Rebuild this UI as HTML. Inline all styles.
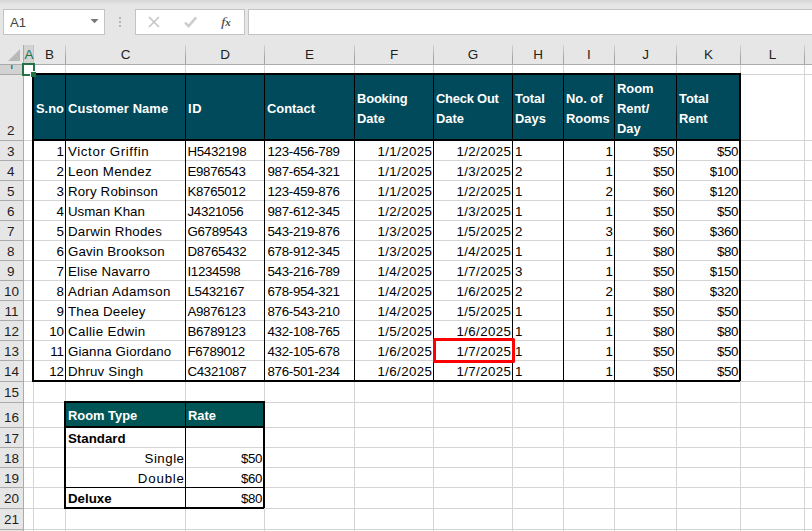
<!DOCTYPE html>
<html lang="en"><head><meta charset="utf-8"><title>Hotel bookings</title>
<style>
html,body{margin:0;padding:0}
body{width:812px;height:531px;overflow:hidden;position:relative;background:#fff;font-family:"Liberation Sans",sans-serif;color:#000}
div{position:absolute;box-sizing:border-box;white-space:nowrap}
.top{left:0;top:0;width:812px;height:45px;background:#e6e6e6}
.topg{left:0;top:0;width:812px;height:5px;background:linear-gradient(#d6d6d6,#e6e6e6)}
.box{background:#fff;border:1px solid #c3c3c3}
.ch{top:45px;height:19px;background:#e6e6e6;color:#1e1e1e;font-size:13.5px;line-height:19px;text-align:center}
.rh{left:0;width:23px;background:#e6e6e6;color:#1e1e1e;font-size:13.5px;text-align:center}
.gl{background:#d4d4d4}
.hl{background:#ababab}
.bk{background:#000}
.c{font-size:13.3px;line-height:20px;height:20px;overflow:visible}
.r{text-align:right}
.b{font-weight:bold}
.th{color:#fff;font-weight:bold;font-size:12.9px;line-height:20px}

</style></head><body>
<div class="top"></div><div class="topg"></div>
<div class="box" style="left:3px;top:9px;width:102px;height:26px"></div>
<div style="left:10px;top:13px;font-size:13.2px;line-height:20px;color:#444">A1</div>
<svg style="position:absolute;left:90px;top:19px" width="9" height="5" viewBox="0 0 9 5"><path d="M0.5 0h8l-4 4.3z" fill="#777"/></svg>
<div style="left:119px;top:17px;width:2px;height:2px;background:#b5b5b5"></div><div style="left:119px;top:21px;width:2px;height:2px;background:#b5b5b5"></div><div style="left:119px;top:25px;width:2px;height:2px;background:#b5b5b5"></div>
<div class="box" style="left:135px;top:9px;width:110px;height:26px"></div>
<svg style="position:absolute;left:148px;top:16px" width="12" height="12" viewBox="0 0 12 12"><path d="M1 1l10 10M11 1L1 11" stroke="#c6c6c6" stroke-width="1.7" fill="none"/></svg>
<svg style="position:absolute;left:183px;top:15px" width="16" height="14" viewBox="0 0 16 14"><path d="M2 7.6l3.6 3.6L13.2 2.4" stroke="#cdcdcd" stroke-width="2.6" fill="none"/></svg>
<div style="left:221px;top:12px;font-family:'Liberation Serif',serif;font-style:italic;font-size:13px;line-height:20px;color:#4a4a4a;letter-spacing:0"><span style="display:inline-block;transform:scaleX(1.25);transform-origin:0 50%">f</span><span style="font-size:11px;font-weight:bold;margin-left:0.5px">x</span></div>
<div class="box" style="left:248px;top:9px;width:580px;height:26px"></div>
<div style="left:0;top:45px;width:812px;height:20px;background:#e6e6e6"></div>
<div class="hl" style="left:0;top:64px;width:812px;height:1px"></div>
<svg style="position:absolute;left:8px;top:49px" width="12" height="12" viewBox="0 0 12 12"><path d="M12 0v12H0z" fill="#b8b8b8"/></svg>
<div class="ch" style="left:23px;width:11px;height:18px;background:#d2d2d2;color:#217346;border-left:1px solid #c2c2c2;border-right:1px solid #c2c2c2;text-indent:0.5px">A</div>
<div class="ch" style="left:34px;width:31px">B</div>
<div style="left:65px;top:45px;width:1px;height:19px;background:linear-gradient(#d2d2d2,#a4a4a4 70%)"></div>
<div class="ch" style="left:66px;width:119px">C</div>
<div style="left:185px;top:45px;width:1px;height:19px;background:linear-gradient(#d2d2d2,#a4a4a4 70%)"></div>
<div class="ch" style="left:186px;width:78px">D</div>
<div style="left:264px;top:45px;width:1px;height:19px;background:linear-gradient(#d2d2d2,#a4a4a4 70%)"></div>
<div class="ch" style="left:265px;width:89px">E</div>
<div style="left:354px;top:45px;width:1px;height:19px;background:linear-gradient(#d2d2d2,#a4a4a4 70%)"></div>
<div class="ch" style="left:355px;width:78px">F</div>
<div style="left:433px;top:45px;width:1px;height:19px;background:linear-gradient(#d2d2d2,#a4a4a4 70%)"></div>
<div class="ch" style="left:434px;width:78px">G</div>
<div style="left:512px;top:45px;width:1px;height:19px;background:linear-gradient(#d2d2d2,#a4a4a4 70%)"></div>
<div class="ch" style="left:513px;width:50px">H</div>
<div style="left:563px;top:45px;width:1px;height:19px;background:linear-gradient(#d2d2d2,#a4a4a4 70%)"></div>
<div class="ch" style="left:564px;width:50px">I</div>
<div style="left:614px;top:45px;width:1px;height:19px;background:linear-gradient(#d2d2d2,#a4a4a4 70%)"></div>
<div class="ch" style="left:615px;width:61px">J</div>
<div style="left:676px;top:45px;width:1px;height:19px;background:linear-gradient(#d2d2d2,#a4a4a4 70%)"></div>
<div class="ch" style="left:677px;width:63px">K</div>
<div style="left:740px;top:45px;width:1px;height:19px;background:linear-gradient(#d2d2d2,#a4a4a4 70%)"></div>
<div class="ch" style="left:741px;width:63px">L</div>
<div style="left:804px;top:45px;width:1px;height:19px;background:linear-gradient(#d2d2d2,#a4a4a4 70%)"></div>
<div class="hl" style="left:23px;top:45px;width:1px;height:19px"></div>
<div style="left:0;top:65px;width:24px;height:470px;background:#e6e6e6"></div>
<div class="hl" style="left:23px;top:65px;width:1px;height:470px"></div>
<div style="left:0;top:65px;width:23px;height:9px;background:#d2d2d2"></div>
<div style="left:0;top:65px;width:23px;height:4px;overflow:hidden"><div class="rh" style="top:-10px;height:19px;line-height:21px;background:none;color:#217346">1</div></div>
<div class="rh" style="top:120px;height:19px;line-height:21px;text-indent:-1.5px">2</div>
<div class="hl" style="left:0;top:140px;width:23px;height:1px"></div>
<div class="rh" style="top:141px;height:19px;line-height:21px;text-indent:-1.5px">3</div>
<div class="hl" style="left:0;top:160px;width:23px;height:1px"></div>
<div class="rh" style="top:161px;height:19px;line-height:21px;text-indent:-1.5px">4</div>
<div class="hl" style="left:0;top:180px;width:23px;height:1px"></div>
<div class="rh" style="top:181px;height:19px;line-height:21px;text-indent:-1.5px">5</div>
<div class="hl" style="left:0;top:200px;width:23px;height:1px"></div>
<div class="rh" style="top:201px;height:19px;line-height:21px;text-indent:-1.5px">6</div>
<div class="hl" style="left:0;top:220px;width:23px;height:1px"></div>
<div class="rh" style="top:221px;height:19px;line-height:21px;text-indent:-1.5px">7</div>
<div class="hl" style="left:0;top:240px;width:23px;height:1px"></div>
<div class="rh" style="top:241px;height:19px;line-height:21px;text-indent:-1.5px">8</div>
<div class="hl" style="left:0;top:260px;width:23px;height:1px"></div>
<div class="rh" style="top:261px;height:19px;line-height:21px;text-indent:-1.5px">9</div>
<div class="hl" style="left:0;top:280px;width:23px;height:1px"></div>
<div class="rh" style="top:281px;height:19px;line-height:21px">10</div>
<div class="hl" style="left:0;top:300px;width:23px;height:1px"></div>
<div class="rh" style="top:301px;height:19px;line-height:21px">11</div>
<div class="hl" style="left:0;top:320px;width:23px;height:1px"></div>
<div class="rh" style="top:321px;height:19px;line-height:21px">12</div>
<div class="hl" style="left:0;top:340px;width:23px;height:1px"></div>
<div class="rh" style="top:341px;height:19px;line-height:21px">13</div>
<div class="hl" style="left:0;top:360px;width:23px;height:1px"></div>
<div class="rh" style="top:361px;height:19px;line-height:21px">14</div>
<div class="hl" style="left:0;top:381px;width:23px;height:1px"></div>
<div class="rh" style="top:382px;height:19px;line-height:21px">15</div>
<div class="hl" style="left:0;top:402px;width:23px;height:1px"></div>
<div class="rh" style="top:407px;height:19px;line-height:21px">16</div>
<div class="hl" style="left:0;top:427px;width:23px;height:1px"></div>
<div class="rh" style="top:428px;height:19px;line-height:21px">17</div>
<div class="hl" style="left:0;top:447px;width:23px;height:1px"></div>
<div class="rh" style="top:448px;height:19px;line-height:21px">18</div>
<div class="hl" style="left:0;top:467px;width:23px;height:1px"></div>
<div class="rh" style="top:468px;height:19px;line-height:21px">19</div>
<div class="hl" style="left:0;top:487px;width:23px;height:1px"></div>
<div class="rh" style="top:488px;height:19px;line-height:21px">20</div>
<div class="hl" style="left:0;top:508px;width:23px;height:1px"></div>
<div class="rh" style="top:509px;height:19px;line-height:21px">21</div>
<div class="hl" style="left:0;top:529px;width:23px;height:1px"></div>
<div class="rh" style="top:530px;height:19px;line-height:21px">22</div>
<div class="hl" style="left:0;top:550px;width:23px;height:1px"></div>
<div class="hl" style="left:0;top:74px;width:23px;height:1px"></div>
<div class="gl" style="left:24px;top:74px;width:788px;height:1px"></div>
<div class="gl" style="left:24px;top:140px;width:788px;height:1px"></div>
<div class="gl" style="left:24px;top:160px;width:788px;height:1px"></div>
<div class="gl" style="left:24px;top:180px;width:788px;height:1px"></div>
<div class="gl" style="left:24px;top:200px;width:788px;height:1px"></div>
<div class="gl" style="left:24px;top:220px;width:788px;height:1px"></div>
<div class="gl" style="left:24px;top:240px;width:788px;height:1px"></div>
<div class="gl" style="left:24px;top:260px;width:788px;height:1px"></div>
<div class="gl" style="left:24px;top:280px;width:788px;height:1px"></div>
<div class="gl" style="left:24px;top:300px;width:788px;height:1px"></div>
<div class="gl" style="left:24px;top:320px;width:788px;height:1px"></div>
<div class="gl" style="left:24px;top:340px;width:788px;height:1px"></div>
<div class="gl" style="left:24px;top:360px;width:788px;height:1px"></div>
<div class="gl" style="left:24px;top:381px;width:788px;height:1px"></div>
<div class="gl" style="left:24px;top:402px;width:788px;height:1px"></div>
<div class="gl" style="left:24px;top:427px;width:788px;height:1px"></div>
<div class="gl" style="left:24px;top:447px;width:788px;height:1px"></div>
<div class="gl" style="left:24px;top:467px;width:788px;height:1px"></div>
<div class="gl" style="left:24px;top:487px;width:788px;height:1px"></div>
<div class="gl" style="left:24px;top:508px;width:788px;height:1px"></div>
<div class="gl" style="left:24px;top:529px;width:788px;height:1px"></div>
<div class="gl" style="left:24px;top:550px;width:788px;height:1px"></div>
<div class="gl" style="left:33px;top:65px;width:1px;height:470px"></div>
<div class="gl" style="left:65px;top:65px;width:1px;height:470px"></div>
<div class="gl" style="left:185px;top:65px;width:1px;height:470px"></div>
<div class="gl" style="left:264px;top:65px;width:1px;height:470px"></div>
<div class="gl" style="left:354px;top:65px;width:1px;height:470px"></div>
<div class="gl" style="left:433px;top:65px;width:1px;height:470px"></div>
<div class="gl" style="left:512px;top:65px;width:1px;height:470px"></div>
<div class="gl" style="left:563px;top:65px;width:1px;height:470px"></div>
<div class="gl" style="left:614px;top:65px;width:1px;height:470px"></div>
<div class="gl" style="left:676px;top:65px;width:1px;height:470px"></div>
<div class="gl" style="left:740px;top:65px;width:1px;height:470px"></div>
<div class="gl" style="left:804px;top:65px;width:1px;height:470px"></div>
<div class="gl" style="left:868px;top:65px;width:1px;height:470px"></div>
<div style="left:34px;top:75px;width:706px;height:65px;background:#014a5b"></div>
<div class="th" style="left:36px;top:99px">S.no</div>
<div class="th" style="left:68px;top:99px;letter-spacing:0.1px">Customer Name</div>
<div class="th" style="left:188px;top:99px;letter-spacing:0.7px">ID</div>
<div class="th" style="left:267px;top:99px">Contact</div>
<div class="th" style="left:357px;top:89px;letter-spacing:-0.15px">Booking</div>
<div class="th" style="left:357px;top:109px">Date</div>
<div class="th" style="left:436px;top:89px;letter-spacing:-0.2px">Check Out</div>
<div class="th" style="left:436px;top:109px">Date</div>
<div class="th" style="left:515px;top:89px">Total</div>
<div class="th" style="left:515px;top:109px">Days</div>
<div class="th" style="left:566px;top:89px">No. of</div>
<div class="th" style="left:566px;top:109px">Rooms</div>
<div class="th" style="left:617px;top:79px">Room</div>
<div class="th" style="left:617px;top:99px">Rent/</div>
<div class="th" style="left:617px;top:119px">Day</div>
<div class="th" style="left:679px;top:89px">Total</div>
<div class="th" style="left:679px;top:109px">Rent</div>
<div class="c r " style="left:34px;width:30px;top:142px">1</div>
<div class="c " style="left:68px;top:142px;letter-spacing:0.62px">Victor Griffin</div>
<div class="c " style="left:187.5px;top:142px;letter-spacing:-0.33px">H5432198</div>
<div class="c " style="left:267.5px;top:142px;letter-spacing:-0.3px">123-456-789</div>
<div class="c r " style="left:355px;width:77.4px;top:142px;letter-spacing:0.4px">1/1/2025</div>
<div class="c r " style="left:434px;width:77.4px;top:142px;letter-spacing:0.4px">1/2/2025</div>
<div class="c " style="left:515px;top:142px">1</div>
<div class="c r " style="left:564px;width:49px;top:142px">1</div>
<div class="c r " style="left:615px;width:59.2px;top:142px;letter-spacing:-0.3px">$50</div>
<div class="c r " style="left:677px;width:61.2px;top:142px;letter-spacing:-0.3px">$50</div>
<div class="c r " style="left:34px;width:30px;top:162px">2</div>
<div class="c " style="left:68px;top:162px;letter-spacing:0.3px">Leon Mendez</div>
<div class="c " style="left:187.5px;top:162px;letter-spacing:-0.33px">E9876543</div>
<div class="c " style="left:267.5px;top:162px;letter-spacing:-0.3px">987-654-321</div>
<div class="c r " style="left:355px;width:77.4px;top:162px;letter-spacing:0.4px">1/1/2025</div>
<div class="c r " style="left:434px;width:77.4px;top:162px;letter-spacing:0.4px">1/3/2025</div>
<div class="c " style="left:515px;top:162px">2</div>
<div class="c r " style="left:564px;width:49px;top:162px">1</div>
<div class="c r " style="left:615px;width:59.2px;top:162px;letter-spacing:-0.3px">$50</div>
<div class="c r " style="left:677px;width:61.2px;top:162px;letter-spacing:-0.3px">$100</div>
<div class="c r " style="left:34px;width:30px;top:182px">3</div>
<div class="c " style="left:68px;top:182px;letter-spacing:0.17px">Rory Robinson</div>
<div class="c " style="left:187.5px;top:182px;letter-spacing:-0.33px">K8765012</div>
<div class="c " style="left:267.5px;top:182px;letter-spacing:-0.3px">123-459-876</div>
<div class="c r " style="left:355px;width:77.4px;top:182px;letter-spacing:0.4px">1/1/2025</div>
<div class="c r " style="left:434px;width:77.4px;top:182px;letter-spacing:0.4px">1/2/2025</div>
<div class="c " style="left:515px;top:182px">1</div>
<div class="c r " style="left:564px;width:49px;top:182px">2</div>
<div class="c r " style="left:615px;width:59.2px;top:182px;letter-spacing:-0.3px">$60</div>
<div class="c r " style="left:677px;width:61.2px;top:182px;letter-spacing:-0.3px">$120</div>
<div class="c r " style="left:34px;width:30px;top:202px">4</div>
<div class="c " style="left:68px;top:202px">Usman Khan</div>
<div class="c " style="left:187.5px;top:202px;letter-spacing:-0.33px">J4321056</div>
<div class="c " style="left:267.5px;top:202px;letter-spacing:-0.3px">987-612-345</div>
<div class="c r " style="left:355px;width:77.4px;top:202px;letter-spacing:0.4px">1/2/2025</div>
<div class="c r " style="left:434px;width:77.4px;top:202px;letter-spacing:0.4px">1/3/2025</div>
<div class="c " style="left:515px;top:202px">1</div>
<div class="c r " style="left:564px;width:49px;top:202px">1</div>
<div class="c r " style="left:615px;width:59.2px;top:202px;letter-spacing:-0.3px">$50</div>
<div class="c r " style="left:677px;width:61.2px;top:202px;letter-spacing:-0.3px">$50</div>
<div class="c r " style="left:34px;width:30px;top:222px">5</div>
<div class="c " style="left:68px;top:222px;letter-spacing:0.25px">Darwin Rhodes</div>
<div class="c " style="left:187.5px;top:222px;letter-spacing:-0.33px">G6789543</div>
<div class="c " style="left:267.5px;top:222px;letter-spacing:-0.3px">543-219-876</div>
<div class="c r " style="left:355px;width:77.4px;top:222px;letter-spacing:0.4px">1/3/2025</div>
<div class="c r " style="left:434px;width:77.4px;top:222px;letter-spacing:0.4px">1/5/2025</div>
<div class="c " style="left:515px;top:222px">2</div>
<div class="c r " style="left:564px;width:49px;top:222px">3</div>
<div class="c r " style="left:615px;width:59.2px;top:222px;letter-spacing:-0.3px">$60</div>
<div class="c r " style="left:677px;width:61.2px;top:222px;letter-spacing:-0.3px">$360</div>
<div class="c r " style="left:34px;width:30px;top:242px">6</div>
<div class="c " style="left:68px;top:242px;letter-spacing:0.15px">Gavin Brookson</div>
<div class="c " style="left:187.5px;top:242px;letter-spacing:-0.33px">D8765432</div>
<div class="c " style="left:267.5px;top:242px;letter-spacing:-0.3px">678-912-345</div>
<div class="c r " style="left:355px;width:77.4px;top:242px;letter-spacing:0.4px">1/3/2025</div>
<div class="c r " style="left:434px;width:77.4px;top:242px;letter-spacing:0.4px">1/4/2025</div>
<div class="c " style="left:515px;top:242px">1</div>
<div class="c r " style="left:564px;width:49px;top:242px">1</div>
<div class="c r " style="left:615px;width:59.2px;top:242px;letter-spacing:-0.3px">$80</div>
<div class="c r " style="left:677px;width:61.2px;top:242px;letter-spacing:-0.3px">$80</div>
<div class="c r " style="left:34px;width:30px;top:262px">7</div>
<div class="c " style="left:68px;top:262px;letter-spacing:0.17px">Elise Navarro</div>
<div class="c " style="left:187.5px;top:262px;letter-spacing:-0.33px">I1234598</div>
<div class="c " style="left:267.5px;top:262px;letter-spacing:-0.3px">543-216-789</div>
<div class="c r " style="left:355px;width:77.4px;top:262px;letter-spacing:0.4px">1/4/2025</div>
<div class="c r " style="left:434px;width:77.4px;top:262px;letter-spacing:0.4px">1/7/2025</div>
<div class="c " style="left:515px;top:262px">3</div>
<div class="c r " style="left:564px;width:49px;top:262px">1</div>
<div class="c r " style="left:615px;width:59.2px;top:262px;letter-spacing:-0.3px">$50</div>
<div class="c r " style="left:677px;width:61.2px;top:262px;letter-spacing:-0.3px">$150</div>
<div class="c r " style="left:34px;width:30px;top:282px">8</div>
<div class="c " style="left:68px;top:282px;letter-spacing:0.38px">Adrian Adamson</div>
<div class="c " style="left:187.5px;top:282px;letter-spacing:-0.33px">L5432167</div>
<div class="c " style="left:267.5px;top:282px;letter-spacing:-0.3px">678-954-321</div>
<div class="c r " style="left:355px;width:77.4px;top:282px;letter-spacing:0.4px">1/4/2025</div>
<div class="c r " style="left:434px;width:77.4px;top:282px;letter-spacing:0.4px">1/6/2025</div>
<div class="c " style="left:515px;top:282px">2</div>
<div class="c r " style="left:564px;width:49px;top:282px">2</div>
<div class="c r " style="left:615px;width:59.2px;top:282px;letter-spacing:-0.3px">$80</div>
<div class="c r " style="left:677px;width:61.2px;top:282px;letter-spacing:-0.3px">$320</div>
<div class="c r " style="left:34px;width:30px;top:302px">9</div>
<div class="c " style="left:68px;top:302px;letter-spacing:0.2px">Thea Deeley</div>
<div class="c " style="left:187.5px;top:302px;letter-spacing:-0.33px">A9876123</div>
<div class="c " style="left:267.5px;top:302px;letter-spacing:-0.3px">876-543-210</div>
<div class="c r " style="left:355px;width:77.4px;top:302px;letter-spacing:0.4px">1/4/2025</div>
<div class="c r " style="left:434px;width:77.4px;top:302px;letter-spacing:0.4px">1/5/2025</div>
<div class="c " style="left:515px;top:302px">1</div>
<div class="c r " style="left:564px;width:49px;top:302px">1</div>
<div class="c r " style="left:615px;width:59.2px;top:302px;letter-spacing:-0.3px">$50</div>
<div class="c r " style="left:677px;width:61.2px;top:302px;letter-spacing:-0.3px">$50</div>
<div class="c r " style="left:34px;width:30px;top:322px">10</div>
<div class="c " style="left:68px;top:322px;letter-spacing:0.36px">Callie Edwin</div>
<div class="c " style="left:187.5px;top:322px;letter-spacing:-0.33px">B6789123</div>
<div class="c " style="left:267.5px;top:322px;letter-spacing:-0.3px">432-108-765</div>
<div class="c r " style="left:355px;width:77.4px;top:322px;letter-spacing:0.4px">1/5/2025</div>
<div class="c r " style="left:434px;width:77.4px;top:322px;letter-spacing:0.4px">1/6/2025</div>
<div class="c " style="left:515px;top:322px">1</div>
<div class="c r " style="left:564px;width:49px;top:322px">1</div>
<div class="c r " style="left:615px;width:59.2px;top:322px;letter-spacing:-0.3px">$80</div>
<div class="c r " style="left:677px;width:61.2px;top:322px;letter-spacing:-0.3px">$80</div>
<div class="c r " style="left:34px;width:30px;top:342px">11</div>
<div class="c " style="left:68px;top:342px;letter-spacing:0.14px">Gianna Giordano</div>
<div class="c " style="left:187.5px;top:342px;letter-spacing:-0.33px">F6789012</div>
<div class="c " style="left:267.5px;top:342px;letter-spacing:-0.3px">432-105-678</div>
<div class="c r " style="left:355px;width:77.4px;top:342px;letter-spacing:0.4px">1/6/2025</div>
<div class="c r " style="left:434px;width:77.4px;top:342px;letter-spacing:0.4px">1/7/2025</div>
<div class="c " style="left:515px;top:342px">1</div>
<div class="c r " style="left:564px;width:49px;top:342px">1</div>
<div class="c r " style="left:615px;width:59.2px;top:342px;letter-spacing:-0.3px">$50</div>
<div class="c r " style="left:677px;width:61.2px;top:342px;letter-spacing:-0.3px">$50</div>
<div class="c r " style="left:34px;width:30px;top:362px">12</div>
<div class="c " style="left:68px;top:362px;letter-spacing:0.2px">Dhruv Singh</div>
<div class="c " style="left:187.5px;top:362px;letter-spacing:-0.33px">C4321087</div>
<div class="c " style="left:267.5px;top:362px;letter-spacing:-0.3px">876-501-234</div>
<div class="c r " style="left:355px;width:77.4px;top:362px;letter-spacing:0.4px">1/6/2025</div>
<div class="c r " style="left:434px;width:77.4px;top:362px;letter-spacing:0.4px">1/7/2025</div>
<div class="c " style="left:515px;top:362px">1</div>
<div class="c r " style="left:564px;width:49px;top:362px">1</div>
<div class="c r " style="left:615px;width:59.2px;top:362px;letter-spacing:-0.3px">$50</div>
<div class="c r " style="left:677px;width:61.2px;top:362px;letter-spacing:-0.3px">$50</div>
<div class="bk" style="left:32px;top:73px;width:2px;height:308px"></div>
<div class="bk" style="left:739px;top:73px;width:2px;height:308px"></div>
<div class="bk" style="left:32px;top:73px;width:708px;height:2px"></div>
<div class="bk" style="left:32px;top:139px;width:708px;height:2px"></div>
<div class="bk" style="left:32px;top:380px;width:708px;height:2px"></div>
<div class="bk" style="left:65px;top:74px;width:1px;height:308px"></div>
<div class="bk" style="left:185px;top:74px;width:1px;height:308px"></div>
<div class="bk" style="left:264px;top:74px;width:1px;height:308px"></div>
<div class="bk" style="left:354px;top:74px;width:1px;height:308px"></div>
<div class="bk" style="left:433px;top:74px;width:1px;height:308px"></div>
<div class="bk" style="left:512px;top:74px;width:1px;height:308px"></div>
<div class="bk" style="left:563px;top:74px;width:1px;height:308px"></div>
<div class="bk" style="left:614px;top:74px;width:1px;height:308px"></div>
<div class="bk" style="left:676px;top:74px;width:1px;height:308px"></div>
<div style="left:66px;top:403px;width:198px;height:24px;background:#005656"></div>
<div class="th" style="left:68px;top:406px">Room Type</div>
<div class="th" style="left:188px;top:406px">Rate</div>
<div class="c b" style="left:68px;top:429px">Standard</div>
<div class="c r " style="left:66px;width:118.5px;top:449px;letter-spacing:0.5px">Single</div>
<div class="c r " style="left:186px;width:76.2px;top:449px;letter-spacing:-0.3px">$50</div>
<div class="c r " style="left:66px;width:118.8px;top:469px;letter-spacing:0.8px">Double</div>
<div class="c r " style="left:186px;width:76.2px;top:469px;letter-spacing:-0.3px">$60</div>
<div class="c b" style="left:68px;top:489px">Deluxe</div>
<div class="c r " style="left:186px;width:76.2px;top:489px;letter-spacing:-0.3px">$80</div>
<div class="bk" style="left:64px;top:401px;width:2px;height:107px"></div>
<div class="bk" style="left:263px;top:401px;width:2px;height:107px"></div>
<div class="bk" style="left:185px;top:402px;width:1px;height:107px"></div>
<div class="bk" style="left:64px;top:401px;width:200px;height:2px"></div>
<div class="bk" style="left:64px;top:426px;width:200px;height:2px"></div>
<div class="bk" style="left:64px;top:507px;width:200px;height:2px"></div>
<div class="bk" style="left:65px;top:487px;width:200px;height:1px"></div>
<div style="left:433px;top:338px;width:82px;height:25px;border:3px solid #ff0000;border-radius:1.5px"></div>
<div style="left:22px;top:63px;width:13px;height:13px;border:2px solid #217346"></div>
<div style="left:30px;top:71px;width:6px;height:6px;background:#217346;border:1px solid #fff;border-right:0;border-bottom:0"></div>
</body></html>
